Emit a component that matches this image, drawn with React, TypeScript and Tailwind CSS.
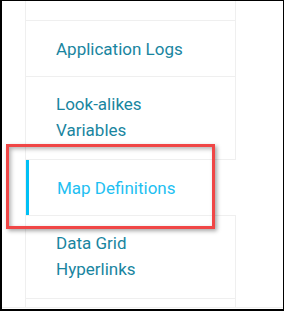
import React from "react";

const itemText = "text-[17px] leading-[26px] text-[#19859f]";

export default function App() {
  return (
    <div
      className="relative w-[284px] h-[311px] bg-white border-black border-t border-l-2 border-r border-b-2 overflow-hidden"
      style={{ fontFamily: "Roboto, 'Liberation Sans', sans-serif" }}
    >
      <div className="flex flex-col h-full">
        <div className="ml-[23px] w-[211px] h-[306px] flex flex-col">
          <div className="h-[20px] border-x border-b border-[#efefef]" />
          <div className="border-x border-b border-[#efefef] pl-[30px] pt-[15px] pb-[14px]">
            <div className={itemText}>Application Logs</div>
          </div>
          <div className="border-x border-b border-[#efefef] pl-[30px] pt-[14px] pb-[16px]">
            <div className={itemText}>Look-alikes</div>
            <div className={itemText}>Variables</div>
          </div>
          <div className="flex border-l border-[#efefef] h-[55px]">
            <div className="w-[3px] bg-[#00c0f5]" />
            <div className="pl-[28px] pt-[15px] pb-[14px]">
              <div className="text-[17px] leading-[26px] text-[#1ec0f2]">Map Definitions</div>
            </div>
          </div>
          <div className="border border-[#efefef] pl-[30px] pt-[14px] pb-[16px]">
            <div className={itemText}>Data Grid</div>
            <div className={itemText}>Hyperlinks</div>
          </div>
          <div className="flex-1 border-x border-[#efefef]" />
        </div>
        <div className="h-[2px] border-t border-[#efefef]" />
      </div>
      <div className="absolute left-[4px] top-[143px] w-[209px] h-[85px] border-[3px] border-[#f04646] shadow-[2px_2px_4px_rgba(0,0,0,0.35),inset_2px_2px_4px_rgba(0,0,0,0.3)]" />
    </div>
  );
}
